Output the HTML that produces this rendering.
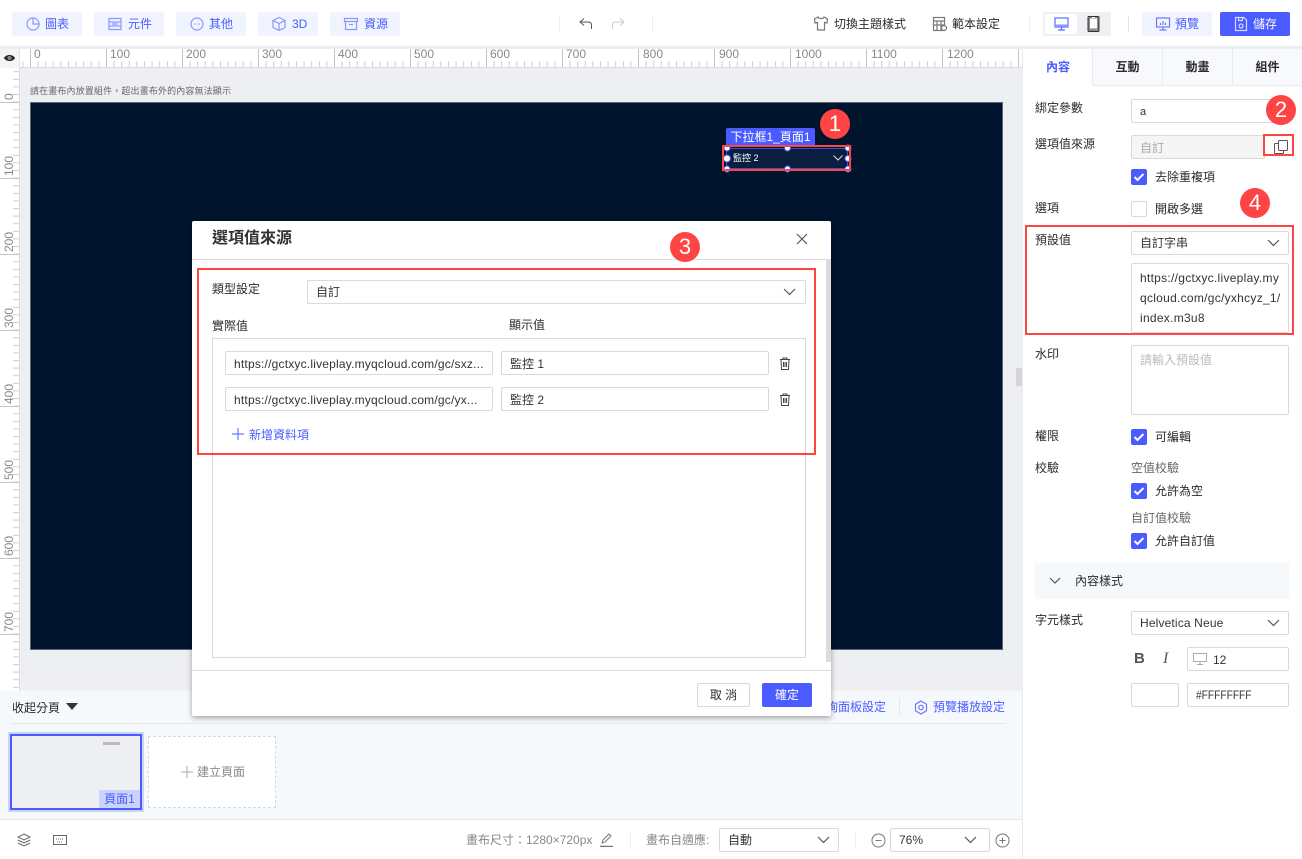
<!DOCTYPE html>
<html lang="zh-Hant"><head><meta charset="utf-8"><title>選項值來源</title>
<style>
*{box-sizing:border-box}
html,body{margin:0;padding:0;width:1302px;height:859px;overflow:hidden;background:#fff}
body{font-family:"Liberation Sans","WenQuanYi Zen Hei","Noto Sans CJK TC",sans-serif;font-size:12px;color:#2b2b2b;position:relative}
.a{position:absolute;white-space:nowrap}
.t{position:absolute;white-space:nowrap;line-height:16px;height:16px}
.btn{position:absolute;top:12px;height:24px;background:#f0f4fe;border-radius:2px;color:#4a5bff;line-height:24px}
.btn span{position:absolute;top:0}
.btn svg{position:absolute;top:4px;left:13px}
.inp{position:absolute;background:#fff;border:1px solid #d9d9d9;border-radius:2px;height:24px;line-height:22px;padding-left:8px;color:#333;white-space:nowrap;overflow:hidden}
.chev{position:absolute;fill:none;stroke:#555;stroke-width:1.2}
.cb{position:absolute;width:16px;height:16px;border-radius:2px;background:#4a5bff}
.cb svg{position:absolute;left:0;top:0}
.red{position:absolute;border:2px solid #ff4444}
.badge{position:absolute;width:30px;height:30px;border-radius:50%;background:#ff4444;color:#fff;font-size:22px;line-height:30px;text-align:center;font-family:"Liberation Sans",sans-serif}
.h{position:absolute;top:47px;font-size:12px;color:#888;line-height:14px}
.v{position:absolute;left:3px;font-size:12px;color:#888;line-height:12px;transform:rotate(-90deg);transform-origin:0 0}
.tab{position:absolute;top:49px;height:37px;width:70px;text-align:center;line-height:37px;font-weight:bold;background:#f7f9fc;border-bottom:1px solid #e8ecf2;border-left:1px solid #e8ecf2}
.h2{color:#4a5bff}
.low{line-height:24px}
</style></head><body>

<!-- top bar -->
<div class="btn" style="left:12px;width:70px"><svg width="16" height="16" viewBox="0 0 16 16" fill="none" stroke="#8a96ff" stroke-width="1.2"><path d="M8 2a6 6 0 1 0 6 6H8z"/><path d="M8 2a6 6 0 0 1 6 6"/></svg><span style="left:33px">圖表</span></div>
<div class="btn" style="left:94px;width:70px"><svg width="16" height="16" viewBox="0 0 16 16" fill="none" stroke="#8a96ff" stroke-width="1.2"><rect x="2" y="2.500" width="12" height="11"/><path d="M2 6h12M2 10h12M5 8h6"/></svg><span style="left:34px">元件</span></div>
<div class="btn" style="left:176px;width:70px"><svg width="16" height="16" viewBox="0 0 16 16" fill="none" stroke="#8a96ff" stroke-width="1.2"><circle cx="8" cy="8" r="6"/><path d="M5 8h1M7.500 8h1M10 8h1"/></svg><span style="left:33px">其他</span></div>
<div class="btn" style="left:258px;width:60px"><svg width="16" height="16" viewBox="0 0 16 16" fill="none" stroke="#8a96ff" stroke-width="1.2"><path d="M8 1.500l6 3v7l-6 3-6-3v-7zM2 4.500l6 3 6-3M8 7.500v7"/></svg><span style="left:34px">3D</span></div>
<div class="btn" style="left:330px;width:70px"><svg width="16" height="16" viewBox="0 0 16 16" fill="none" stroke="#8a96ff" stroke-width="1.2"><rect x="1.500" y="2.500" width="13" height="3"/><path d="M2.500 5.500v8h11v-8M6 8.500h4"/></svg><span style="left:34px">資源</span></div>

<div class="a" style="left:559px;top:16px;width:1px;height:16px;background:#eee"></div>
<svg class="a" style="left:578px;top:16px" width="16" height="16" viewBox="0 0 16 16" fill="none" stroke="#555" stroke-width="1"><path d="M6 2.500L2 6l4 3.500M2 6h8.500c2 0 3 1.500 3 3.500V13"/></svg>
<svg class="a" style="left:610px;top:16px" width="16" height="16" viewBox="0 0 16 16" fill="none" stroke="#ccc" stroke-width="1"><path d="M10 2.500L14 6l-4 3.500M14 6H5.500c-2 0-3 1.500-3 3.500V13"/></svg>
<div class="a" style="left:652px;top:16px;width:1px;height:16px;background:#eee"></div>

<svg class="a" style="left:813px;top:15px" width="16" height="18" viewBox="0 0 16 18" fill="none" stroke="#777" stroke-width="1.200"><path d="M5 2L1.500 4 2 8l2.500-.5V15h7V7.500L14 8l.5-4L11 2c-.5 2-5.500 2-6 0z"/></svg>
<div class="t" style="left:834px;top:16px">切換主題樣式</div>
<svg class="a" style="left:932px;top:16px" width="16" height="16" viewBox="0 0 16 16" fill="none" stroke="#777" stroke-width="1.200"><rect x="1.500" y="1.500" width="11" height="13"/><path d="M1.500 5h11M5 5v9.500M9 5v9.500M1.500 9h11"/><circle cx="12" cy="12" r="2.500" fill="#fff"/></svg>
<div class="t" style="left:952px;top:16px">範本設定</div>
<div class="a" style="left:1029px;top:16px;width:1px;height:16px;background:#eee"></div>
<div class="a" style="left:1043px;top:12px;width:68px;height:24px;background:#eff0f4;border-radius:2px"></div>
<div class="a" style="left:1045px;top:14px;width:32px;height:20px;background:#fff;border-radius:2px"></div>
<svg class="a" style="left:1054px;top:17px" width="15" height="14" viewBox="0 0 15 14" fill="none" stroke="#5a6aff" stroke-width="1.200"><rect x="1" y="1" width="13" height="9"/><path d="M7.500 10v2.500M4 13h7"/><rect x="1" y="7.500" width="13" height="2.500" fill="#8a96ff" stroke="none"/></svg>
<svg class="a" style="left:1087px;top:16px" width="13" height="16" viewBox="0 0 13 16"><rect x="1" y="0.500" width="11" height="15" rx="1" fill="#8a8a8a" stroke="#333"/><rect x="3" y="2.500" width="7" height="10" fill="#fff"/><path d="M5 1.500h3" stroke="#fff"/></svg>
<div class="a" style="left:1128px;top:16px;width:1px;height:16px;background:#e4e4e4"></div>
<div class="btn" style="left:1142px;width:70px"><svg width="16" height="16" viewBox="0 0 16 16" fill="none" stroke="#6a78ff" stroke-width="1.200"><rect x="1.500" y="2" width="13" height="9"/><path d="M8 11v3M4.500 14h7M5.500 9V7M8 9V5M10.500 9V6.500"/></svg><span style="left:33px">預覽</span></div>
<div class="btn" style="left:1220px;width:70px;background:#4a5bff;color:#fff"><svg width="16" height="16" viewBox="0 0 16 16" fill="none" stroke="#d5daff" stroke-width="1.200"><path d="M2.500 1.500h8.500l2.500 2.500v10.500h-11z"/><path d="M5.500 1.500v3h4v-3"/><circle cx="8" cy="10" r="2"/></svg><span style="left:33px">儲存</span></div>

<!-- workspace -->
<div class="a" style="left:0;top:46px;width:1302px;height:3px;background:#eceef1"></div>
<div class="a" style="left:0;top:68px;width:1022px;height:623px;background:#eeeff3"></div>
<div class="a" style="left:20px;top:686px;width:1002px;height:5px;background:#f0f0f0"></div>

<!-- horizontal ruler -->
<svg class="a" style="left:0;top:49px" width="1022" height="19">
<defs><pattern id="hp" x="22.400" y="0" width="7.600" height="19" patternUnits="userSpaceOnUse"><rect x="0" y="12" width="1" height="6" fill="#cfcfcf"/></pattern>
<pattern id="hq" x="30" y="0" width="76" height="19" patternUnits="userSpaceOnUse"><rect x="0" y="0" width="1" height="18" fill="#c4c4c4"/></pattern></defs>
<rect width="1022" height="19" fill="#fff"/>
<rect width="1022" height="19" fill="url(#hp)"/><rect width="1022" height="19" fill="url(#hq)"/>
<rect y="18" width="1022" height="1" fill="#dcdcdc"/>
<rect x="0" width="20" height="19" fill="#f4f4f5"/><rect x="19" width="1" height="19" fill="#e4e4e4"/>
<path d="M4 9c2-4 9-4 11 0-2 4-9 4-11 0z" fill="#2a2a2a"/><circle cx="9.500" cy="9" r="2" fill="#888"/>
</svg>
<div class="h" style="left:34px">0</div><div class="h" style="left:110px">100</div><div class="h" style="left:186px">200</div><div class="h" style="left:262px">300</div><div class="h" style="left:338px">400</div><div class="h" style="left:414px">500</div><div class="h" style="left:490px">600</div><div class="h" style="left:566px">700</div>
<div class="h" style="left:643px">800</div><div class="h" style="left:719px">900</div><div class="h" style="left:795px">1000</div><div class="h" style="left:871px">1100</div><div class="h" style="left:947px">1200</div>

<!-- vertical ruler -->
<svg class="a" style="left:0;top:68px" width="20" height="623">
<defs><pattern id="vp" x="0" y="3.200" width="20" height="7.600" patternUnits="userSpaceOnUse"><rect x="13" y="0" width="6" height="1" fill="#cfcfcf"/></pattern>
<pattern id="vq" x="0" y="34" width="20" height="76" patternUnits="userSpaceOnUse"><rect x="0" y="0" width="19" height="1" fill="#c4c4c4"/></pattern></defs>
<rect width="20" height="623" fill="#fff"/><rect width="20" height="623" fill="url(#vp)"/><rect width="20" height="623" fill="url(#vq)"/>
<rect x="19" width="1" height="623" fill="#dcdcdc"/>
</svg>
<div class="v" style="top:100px">0</div><div class="v" style="top:176px">100</div><div class="v" style="top:252px">200</div><div class="v" style="top:328px">300</div><div class="v" style="top:404px">400</div><div class="v" style="top:480px">500</div><div class="v" style="top:556px">600</div><div class="v" style="top:632px">700</div>

<div class="t" style="left:30px;top:83px;font-size:9px;color:#666;letter-spacing:.14px">請在畫布內放置組件，超出畫布外的內容無法顯示</div>

<!-- canvas -->
<div class="a" style="left:30px;top:102px;width:973px;height:548px;background:#00142e;border:1px solid #5a6676"></div>
<div class="a" style="left:726px;top:128px;width:89px;height:19px;background:#4a5bff;border-radius:2px 2px 0 0;color:#fff;line-height:19px;text-align:center">下拉框1_頁面1</div>
<div class="a" style="left:726px;top:148px;width:122px;height:21px;background:#0a1f3f;border:1px solid #3a55c8;color:#fff;font-size:9px;line-height:19px;padding-left:6px">監控 2</div>
<svg class="chev" style="left:833px;top:155px;stroke:#ddd;stroke-width:1" width="10" height="6" viewBox="0 0 10 6"><path d="M0.500 0.500l4.500 4.500 4.500-4.500"/></svg>
<svg class="a" style="left:720px;top:142px" width="134" height="34"><g fill="#fff" stroke="#4a5bff" stroke-width="1"><circle cx="7" cy="6" r="3"/><circle cx="67.500" cy="6" r="3"/><circle cx="128" cy="6" r="3"/><circle cx="7" cy="16.500" r="3.500"/><circle cx="128" cy="16.500" r="3"/><circle cx="7" cy="27" r="3"/><circle cx="67.500" cy="27" r="3"/><circle cx="128" cy="27" r="3"/></g></svg>
<div class="red" style="left:722px;top:145px;width:129px;height:26px"></div>
<div class="badge" style="left:820px;top:109px">1</div>

<!-- bottom panel -->
<div class="a" style="left:0;top:691px;width:1022px;height:128px;background:#f6f9fc"></div>
<div class="t" style="left:12px;top:700px">收起分頁</div>
<svg class="a" style="left:66px;top:703px" width="12" height="8"><path d="M0 0h12L6 7z" fill="#333"/></svg>
<div class="a" style="left:12px;top:723px;width:994px;height:1px;background:#e4e8ed"></div>
<div class="t h2" style="left:826px;top:699px">詢面板設定</div>
<div class="a" style="left:899px;top:698px;width:1px;height:18px;background:#e4e8ed"></div>
<svg class="a" style="left:914px;top:700px" width="14" height="15" viewBox="0 0 14 15" fill="none" stroke="#6a78ff" stroke-width="1.200"><path d="M7 1l5.500 3.200v6.600L7 14l-5.500-3.200V4.200z"/><circle cx="7" cy="7.500" r="2.200"/></svg>
<div class="t h2" style="left:933px;top:699px">預覽播放設定</div>
<div class="a" style="left:8px;top:732px;width:136px;height:80px;background:#ccd3fb"></div>
<div class="a" style="left:10px;top:734px;width:132px;height:76px;background:#eeeff3;border:2px solid #4a5bff"></div>
<div class="a" style="left:103px;top:742px;width:17px;height:3px;background:#bcbcbc"></div>
<div class="a" style="left:99px;top:790px;width:41px;height:18px;background:#ccd3fb;color:#4a5bff;line-height:18px;text-align:center">頁面1</div>
<div class="a" style="left:148px;top:736px;width:128px;height:72px;background:#fff;border:1px dashed #d9d9d9"></div>
<svg class="a" style="left:181px;top:766px" width="12" height="12"><path d="M0 6h12M6 0v12" stroke="#aaa" stroke-width="1"/></svg>
<div class="t" style="left:197px;top:764px;color:#888">建立頁面</div>

<!-- status bar -->
<div class="a" style="left:0;top:819px;width:1022px;height:1px;background:#e4e6ea"></div>
<svg class="a" style="left:17px;top:833px" width="14" height="14" viewBox="0 0 14 14" fill="none" stroke="#666"><path d="M7 1l6 3-6 3-6-3zM1 7l6 3 6-3M1 10l6 3 6-3"/></svg>
<svg class="a" style="left:53px;top:835px" width="14" height="10" viewBox="0 0 14 10" fill="none" stroke="#666"><rect x="0.500" y="0.500" width="13" height="9"/><path d="M3 4h8M4 7h6" stroke-dasharray="1 1"/></svg>
<div class="t" style="left:466px;top:832px;color:#888">畫布尺寸：1280×720px</div>
<svg class="a" style="left:600px;top:833px" width="13" height="14" viewBox="0 0 13 14" fill="none" stroke="#777"><path d="M2 10l1-3 6-6 2 2-6 6z"/><path d="M0 13.500h13" stroke-width="1.500"/></svg>
<div class="a" style="left:630px;top:832px;width:1px;height:16px;background:#eee"></div>
<div class="t" style="left:646px;top:832px;color:#888">畫布自適應:</div>
<div class="inp" style="left:719px;top:828px;width:120px">自動</div>
<svg class="chev" style="left:817px;top:836px" width="13" height="8"><path d="M1 1l5.500 5.500L12 1"/></svg>
<div class="a" style="left:855px;top:832px;width:1px;height:16px;background:#eee"></div>
<svg class="a" style="left:871px;top:833px" width="15" height="15" fill="none" stroke="#777"><circle cx="7.500" cy="7.500" r="6.500"/><path d="M4.500 7.500h6"/></svg>
<div class="inp" style="left:890px;top:828px;width:100px">76%</div>
<svg class="chev" style="left:964px;top:836px" width="13" height="8"><path d="M1 1l5.500 5.500L12 1"/></svg>
<svg class="a" style="left:995px;top:833px" width="15" height="15" fill="none" stroke="#777"><circle cx="7.500" cy="7.500" r="6.500"/><path d="M4.500 7.500h6M7.500 4.500v6"/></svg>

<!-- modal -->
<div class="a" style="left:192px;top:221px;width:639px;height:495px;background:#fff;border-radius:2px;box-shadow:0 2px 6px rgba(0,0,0,.35)"></div>
<div class="t" style="left:212px;top:229px;font-size:16px;font-weight:bold;line-height:20px;height:20px;color:#333">選項值來源</div>
<svg class="a" style="left:796px;top:233px" width="12" height="12" fill="none" stroke="#555" stroke-width="1.200"><path d="M1 1l10 10M11 1L1 11"/></svg>
<div class="a" style="left:192px;top:259px;width:639px;height:1px;background:#dcdcdc"></div>
<div class="a" style="left:826px;top:260px;width:5px;height:402px;background:#dcdcdc"></div>
<div class="a" style="left:192px;top:670px;width:639px;height:1px;background:#dcdcdc"></div>
<div class="t" style="left:212px;top:281px">類型設定</div>
<div class="inp" style="left:307px;top:280px;width:499px">自訂</div>
<svg class="chev" style="left:783px;top:288px" width="13" height="8"><path d="M1 1l5.500 5.500L12 1"/></svg>
<div class="t" style="left:212px;top:318px">實際值</div>
<div class="t" style="left:509px;top:317px">顯示值</div>
<div class="a" style="left:212px;top:338px;width:594px;height:320px;border:1px solid #d9d9d9"></div>
<div class="inp low" style="left:225px;top:351px;width:268px;letter-spacing:.2px">https://gctxyc.liveplay.myqcloud.com/gc/sxz...</div>
<div class="inp low" style="left:501px;top:351px;width:268px">監控 1</div>
<svg class="a" style="left:779px;top:357px" width="12" height="13" viewBox="0 0 12 13" fill="none" stroke="#444"><path d="M1 2.500h10M4 2.500V1h4v1.500M2 2.500l.5 10h7l.5-10M4.500 5v5M6 5v5M7.500 5v5"/></svg>
<div class="inp low" style="left:225px;top:387px;width:268px;letter-spacing:.2px">https://gctxyc.liveplay.myqcloud.com/gc/yx...</div>
<div class="inp low" style="left:501px;top:387px;width:268px">監控 2</div>
<svg class="a" style="left:779px;top:393px" width="12" height="13" viewBox="0 0 12 13" fill="none" stroke="#444"><path d="M1 2.500h10M4 2.500V1h4v1.500M2 2.500l.5 10h7l.5-10M4.500 5v5M6 5v5M7.500 5v5"/></svg>
<svg class="a" style="left:232px;top:428px" width="12" height="12"><path d="M0 6h12M6 0v12" stroke="#6a78ff" stroke-width="1.200"/></svg>
<div class="t h2" style="left:249px;top:427px">新增資料項</div>
<div class="red" style="left:197px;top:268px;width:619px;height:187px"></div>
<div class="badge" style="left:670px;top:232px">3</div>
<div class="a" style="left:697px;top:683px;width:53px;height:24px;background:#fff;border:1px solid #d9d9d9;border-radius:2px;line-height:22px;text-align:center">取 消</div>
<div class="a" style="left:762px;top:683px;width:50px;height:24px;background:#4a5bff;border-radius:2px;line-height:24px;text-align:center;color:#fff">確定</div>

<!-- right panel -->
<div class="a" style="left:1022px;top:49px;width:280px;height:810px;background:#fff;border-left:1px solid #e8ecf2"></div>
<div class="tab" style="left:1023px;background:#fff;color:#4a5bff;border-left:0;border-bottom:0">內容</div>
<div class="tab" style="left:1092px">互動</div>
<div class="tab" style="left:1162px">動畫</div>
<div class="tab" style="left:1232px">組件</div>

<div class="t" style="left:1035px;top:100px">綁定參數</div>
<div class="inp" style="left:1131px;top:99px;width:158px;font-size:11px;line-height:24px">a</div>
<div class="badge" style="left:1266px;top:95px">2</div>
<div class="t" style="left:1035px;top:136px">選項值來源</div>
<div class="inp low" style="left:1131px;top:135px;width:134px;background:#f5f5f5;color:#aaa">自訂</div>
<svg class="a" style="left:1273px;top:139px" width="16" height="16" viewBox="0 0 16 16" fill="none" stroke="#555"><rect x="5.500" y="1.500" width="9" height="10" rx="1"/><path d="M5 4.500H2.500a1 1 0 0 0-1 1v8a1 1 0 0 0 1 1h7a1 1 0 0 0 1-1V12"/></svg>
<div class="red" style="left:1263px;top:134px;width:31px;height:22px"></div>

<div class="cb" style="left:1131px;top:169px"><svg width="16" height="16" fill="none" stroke="#fff" stroke-width="2"><path d="M3.500 8l3 3 6-6"/></svg></div>
<div class="t" style="left:1155px;top:169px">去除重複項</div>
<div class="t" style="left:1035px;top:200px">選項</div>
<div class="a" style="left:1131px;top:201px;width:16px;height:16px;border:1px solid #d9d9d9;border-radius:2px;background:#fff"></div>
<div class="t" style="left:1155px;top:201px">開啟多選</div>
<div class="badge" style="left:1240px;top:188px">4</div>

<div class="t" style="left:1035px;top:232px">預設值</div>
<div class="inp" style="left:1131px;top:231px;width:158px">自訂字串</div>
<svg class="chev" style="left:1267px;top:239px" width="13" height="8"><path d="M1 1l5.500 5.500L12 1"/></svg>
<div class="a" style="left:1131px;top:263px;width:158px;height:70px;background:#fff;border:1px solid #d9d9d9;border-radius:2px;padding-left:8px;line-height:20px;padding-top:4px;color:#333;letter-spacing:.28px">https://gctxyc.liveplay.my<br>qcloud.com/gc/yxhcyz_1/<br>index.m3u8</div>
<div class="red" style="left:1025px;top:225px;width:269px;height:110px"></div>

<div class="t" style="left:1035px;top:346px">水印</div>
<div class="a" style="left:1131px;top:345px;width:158px;height:70px;background:#fff;border:1px solid #d9d9d9;border-radius:2px;padding:5px 8px;color:#bbb">請輸入預設值</div>
<div class="t" style="left:1035px;top:428px">權限</div>
<div class="cb" style="left:1131px;top:429px"><svg width="16" height="16" fill="none" stroke="#fff" stroke-width="2"><path d="M3.500 8l3 3 6-6"/></svg></div>
<div class="t" style="left:1155px;top:429px">可編輯</div>
<div class="t" style="left:1035px;top:460px">校驗</div>
<div class="t" style="left:1131px;top:460px;color:#666">空值校驗</div>
<div class="cb" style="left:1131px;top:483px"><svg width="16" height="16" fill="none" stroke="#fff" stroke-width="2"><path d="M3.500 8l3 3 6-6"/></svg></div>
<div class="t" style="left:1155px;top:483px">允許為空</div>
<div class="t" style="left:1131px;top:510px;color:#666">自訂值校驗</div>
<div class="cb" style="left:1131px;top:533px"><svg width="16" height="16" fill="none" stroke="#fff" stroke-width="2"><path d="M3.500 8l3 3 6-6"/></svg></div>
<div class="t" style="left:1155px;top:533px">允許自訂值</div>
<div class="a" style="left:1035px;top:563px;width:254px;height:36px;background:#f6f9fc"></div>
<svg class="chev" style="left:1049px;top:577px" width="12" height="8"><path d="M1 1l5 5 5-5"/></svg>
<div class="t" style="left:1075px;top:573px">內容樣式</div>
<div class="t" style="left:1035px;top:612px">字元樣式</div>
<div class="inp" style="left:1131px;top:611px;width:158px;letter-spacing:.15px">Helvetica Neue</div>
<svg class="chev" style="left:1267px;top:619px" width="13" height="8"><path d="M1 1l5.500 5.500L12 1"/></svg>
<div class="a" style="left:1134px;top:651px;font:bold 15px/16px 'Liberation Sans',sans-serif;color:#555">B</div>
<div class="a" style="left:1163px;top:651px;font:italic 16px/16px 'Liberation Serif',serif;color:#555">I</div>
<div class="inp" style="left:1187px;top:647px;width:102px;padding-left:25px;font-size:12px;line-height:24px">12</div>
<svg class="a" style="left:1193px;top:653px" width="14" height="12" fill="none" stroke="#aaa"><rect x="0.500" y="0.500" width="13" height="8"/><path d="M7 8.500v2.500M4 11.500h6"/></svg>
<div class="inp" style="left:1131px;top:683px;width:48px"></div>
<div class="inp" style="left:1187px;top:683px;width:102px"><span style="display:inline-block;transform:scaleX(.85);transform-origin:0 50%">#FFFFFFFF</span></div>
<div class="a" style="left:1016px;top:368px;width:6px;height:18px;background:#d5d5d5;border-radius:1px"></div>
</body></html>
